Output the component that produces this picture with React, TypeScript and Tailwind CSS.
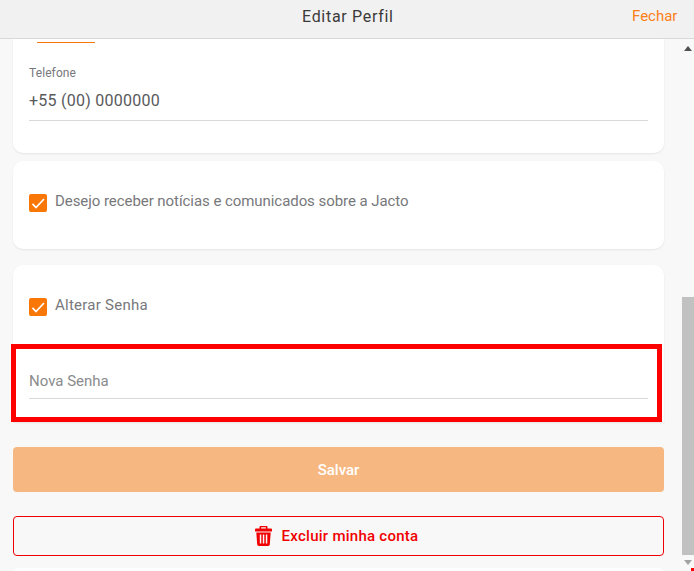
const font = { fontFamily: '"Roboto","Liberation Sans",sans-serif' };

function Check() {
  return (
    <span className="flex h-[18px] w-[18px] shrink-0 items-center justify-center rounded-[2px] bg-[#f97707]">
      <svg width="18" height="18" viewBox="0 0 18 18" fill="none">
        <path d="M3.500 9.800 L7 13.500 L15 5" stroke="#fff" strokeWidth="1.700" />
      </svg>
    </span>
  );
}

function Trash() {
  return (
    <svg width="17" height="20" viewBox="0 0 17 20" fill="#f00000">
      <path fillRule="evenodd" d="M5.500 0h6a1 1 0 0 1 1 1v1.500h3.500a1 1 0 0 1 1 1V5.500H0V3.500a1 1 0 0 1 1-1h3.500V1a1 1 0 0 1 1-1zm.6 1.200v1.300h4.800V1.200z" />
      <path fillRule="evenodd" d="M1.300 6.500h14.400l-.9 12A1.600 1.600 0 0 1 13.200 20H3.800a1.600 1.600 0 0 1-1.600-1.500zM4.800 8.500v9h1.500v-9zm3 0v9h1.500v-9zm3 0v9h1.500v-9z" />
    </svg>
  );
}

export default function App() {
  return (
    <div className="relative flex h-[571px] w-[694px] flex-col overflow-hidden bg-[#f8f8f8]" style={font}>
      <header className="flex h-[39px] shrink-0 items-center border-b border-[#d9d9d9] bg-[#f1f1f1]">
        <div className="w-[681px] pb-[5px] pl-[302px] text-[16px] tracking-[0.7px] text-[#3a3a3a]">Editar Perfil</div>
        <div className="absolute left-[632px] top-[5px] text-[15px] text-[#fb7f17]">Fechar</div>
      </header>
      <div className="flex min-h-0 flex-1">
        <main className="w-[681px] shrink-0 px-[13px]">
          <div className="w-[651px]">
            <section className="h-[114px] rounded-b-[10px] bg-white px-[16px] shadow-[0_1px_2px_rgba(0,0,0,0.08)]">
              <div className="ml-[8px] h-px w-[58px] translate-y-[3px] bg-[#f97707]" />
              <div className="pt-[26px] text-[12px] leading-[14px] tracking-[0.1px] text-[#77787b]">Telefone</div>
              <div className="mt-[11px] h-[30px] border-b border-[#d9d9d9] text-[16px] leading-[20px] tracking-[0.25px] text-[#58595b]">+55 (00) 0000000</div>
            </section>
            <section className="mt-[8px] flex h-[88px] items-start gap-[8px] rounded-[10px] bg-white px-[16px] pt-[33px] shadow-[0_1px_2px_rgba(0,0,0,0.08)]">
              <Check />
              <span className="-mt-px text-[15px] leading-[16px] tracking-[-0.06px] text-[#77787b]">Desejo receber notícias e comunicados sobre a Jacto</span>
            </section>
            <section className="relative mt-[16px] h-[157px] rounded-t-[10px] bg-white px-[16px] pt-[33px] shadow-[0_1px_2px_rgba(0,0,0,0.08)]">
              <div className="flex items-start gap-[8px]">
                <Check />
                <span className="-mt-px text-[15px] leading-[16px] tracking-[0.25px] text-[#77787b]">Alterar Senha</span>
              </div>
              <div className="mt-[55px] h-[28px] border-b border-[#d9d9d9] text-[15px] leading-[20px] text-[#8a8b8d]">Nova Senha</div>
              <div className="absolute left-[-2px] top-[79px] h-[78px] w-[651px] border-[5px] border-[#ff0000]" />
            </section>
            <button className="mt-[25px] flex h-[45px] w-full items-center justify-center rounded-[4px] bg-[#f6b781] pt-[2px] text-[15px] font-medium text-white">Salvar</button>
            <button className="mt-[24px] flex h-[40px] w-full items-center justify-center gap-[10px] rounded-[4px] border border-[#f00000] pr-[4px] text-[15px] font-medium tracking-[0.26px] text-[#f00000]">
              <Trash />
              Excluir minha conta
            </button>
            <div className="mt-[12px] h-[10px] rounded-t-[6px] bg-white" />
          </div>
        </main>
        <aside className="flex w-[13px] flex-col items-end">
          <div className="flex h-[258px] w-[13px] flex-col items-center bg-[#f8f8f8] pt-[7px]">
            <svg width="8" height="5" viewBox="0 0 8 5"><path d="M4 0 L8 5 L0 5Z" fill="#505050" /></svg>
          </div>
          <div className="h-[258px] w-[12px] bg-[#c1c1c1]" />
          <div className="flex w-[13px] flex-1 justify-center pt-[5px]">
            <svg width="8" height="5" viewBox="0 0 8 5"><path d="M0 0 L8 0 L4 5Z" fill="#a3a3a3" /></svg>
          </div>
        </aside>
      </div>
      <div className="absolute bottom-0 right-0 h-[3px] w-[3px] bg-[#ff0000]" />
    </div>
  );
}
